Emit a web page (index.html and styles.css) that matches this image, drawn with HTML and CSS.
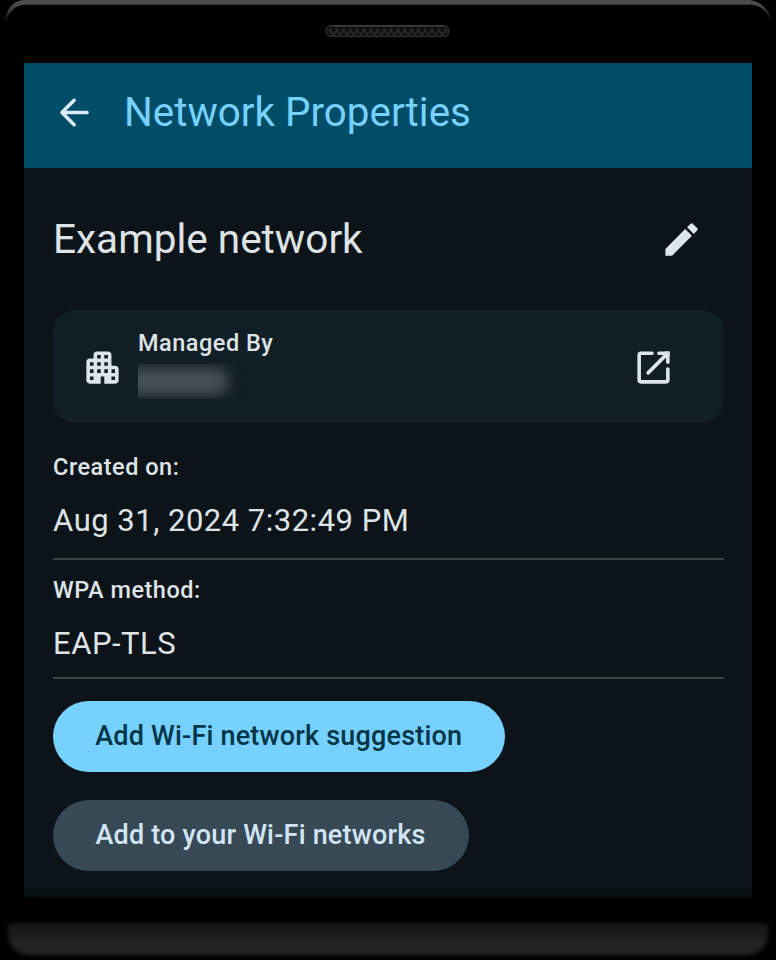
FILE: index.html
```html
<!DOCTYPE html>
<html lang="en">
<head>
<meta charset="utf-8">
<title>Network Properties</title>
<link rel="stylesheet" href="styles.css">
</head>
<body>
<div class="phone">
  <svg class="rim" viewBox="0 0 776 24" aria-hidden="true">
    <defs>
      <linearGradient id="rimFade" x1="0" y1="0" x2="0" y2="1">
        <stop offset="0.2" stop-color="#4b4b4b"/>
        <stop offset="1" stop-color="#111"/>
      </linearGradient>
    </defs>
    <path fill="url(#rimFade)" d="M5 22C6 8 13 0 26 0H747C760 0 768 8 772 22C766 9 759 4.7 749 4.7H25C17 4.7 10 10 5 22Z"/>
  </svg>
  <div class="top-bezel">
    <svg class="speaker" width="126" height="14" viewBox="0 0 126 14" aria-hidden="true">
      <defs>
        <pattern id="mesh" x="5" width="6.8" height="14" patternUnits="userSpaceOnUse">
          <path d="M0 4.5L1 8L3.4 10.5L5.8 8L6.8 4.5" fill="none" stroke="#303030" stroke-width="1.2"/>
        </pattern>
      </defs>
      <rect x="1" y="1.7" width="123" height="10.500" rx="5.2" fill="#101010" stroke="#2b2b2b" stroke-width="1.5"/>
      <rect x="4" y="1" width="118" height="11" fill="url(#mesh)"/>
      <path d="M6 1.8H119" stroke="#414141" stroke-width="1.5"/>
    </svg>
  </div>
  <main class="screen">
    <header class="app-bar">
      <svg class="icon back" viewBox="0 0 24 24" aria-label="Back">
        <path d="M19 12H5.4M11.8 5.2L5 12l6.800 6.800" fill="none" stroke="currentColor" stroke-width="2" stroke-linecap="round" stroke-linejoin="round"/>
      </svg>
      <h1 class="title">Network Properties</h1>
    </header>
    <div class="content">
      <div class="name-row">
        <h2 class="name">Example network</h2>
        <svg class="icon edit" viewBox="0 0 24 24" aria-label="Edit">
          <path fill="currentColor" d="M3 17.250V21h3.750L17.810 9.940l-3.750-3.750L3 17.250zM20.710 7.040a1 1 0 0 0 0-1.410l-2.340-2.340a1 1 0 0 0-1.410 0l-1.830 1.830 3.750 3.750 1.830-1.830z"/>
        </svg>
      </div>
      <section class="card">
        <svg class="icon" viewBox="0 0 24 24" aria-hidden="true">
          <path fill="currentColor" fill-rule="evenodd" d="M9 3h6a2 2 0 0 1 2 2v6h2a2 2 0 0 1 2 2v6a2 2 0 0 1-2 2h-6v-4h-2v4H5a2 2 0 0 1-2-2V9a2 2 0 0 1 2-2h2V5a2 2 0 0 1 2-2zM9 5v2h2V5zM13 5v2h2V5zM5 9v2h2V9zM9 9v2h2V9zM13 9v2h2V9zM5 13v2h2v-2zM9 13v2h2v-2zM13 13v2h2v-2zM17 13v2h2v-2zM5 17v2h2v-2zM17 17v2h2v-2z"/>
        </svg>
        <div class="manager">
          <span class="label">Managed By</span>
          <span class="redacted"><span class="smudge"></span></span>
        </div>
        <svg class="icon open" viewBox="0 0 24 24" aria-label="Open">
          <path d="M11.200 4H5a1 1 0 0 0-1 1v14a1 1 0 0 0 1 1h14a1 1 0 0 0 1-1v-6.200M15 4h5v5M19.600 4.400L9 15" fill="none" stroke="currentColor" stroke-width="2" stroke-linecap="round"/>
          <path d="M18 3h3v3z" fill="currentColor"/>
        </svg>
      </section>
      <dl class="details">
        <div class="field created">
          <dt class="label">Created on:</dt>
          <dd class="value">Aug 31, 2024 7:32:49 PM</dd>
        </div>
        <div class="field wpa">
          <dt class="label">WPA method:</dt>
          <dd class="value">EAP-TLS</dd>
        </div>
      </dl>
      <div class="actions">
        <button class="button primary">Add Wi-Fi network suggestion</button>
        <button class="button tonal">Add to your Wi-Fi networks</button>
      </div>
    </div>
  </main>
  <div class="bottom-bezel"><div class="chin"></div></div>
</div>
</body>
</html>
```
FILE: styles.css
```css
* { box-sizing: border-box; }
body, h1, h2, dl, dt, dd { margin: 0; }
body { background: #000; font-family: Roboto, sans-serif; color: #dee3e6; }
.phone {
  position: relative;
  width: 776px;
  height: 960px;
  overflow: hidden;
  display: flex;
  flex-direction: column;
  background: #000;
}
.rim { position: absolute; top: 0; left: 0; width: 776px; height: 24px; }
.top-bezel {
  height: 63px;
  flex: none;
  display: flex;
  justify-content: center;
  padding-top: 24px;
}
.speaker { display: block; }
.screen {
  width: 728px;
  height: 835px;
  flex: none;
  margin-left: 24px;
  background: linear-gradient(#0c141a 0 825px, #080f11 826px 832px, #050a0b);
}
.app-bar {
  height: 105px;
  display: flex;
  align-items: flex-start;
  padding: 28px 0 0 29px;
  background: #004d67;
}
.icon { width: 43px; height: 43px; flex: none; color: #dbe5ea; }
.back { color: #dceaf8; }
.title {
  margin-left: 28px;
  margin-top: -2px;
  font-size: 40.400px;
  line-height: 47px;
  font-weight: 400;
  color: #76d1ff;
}
.content { padding: 0 28.500px; }
.name-row {
  height: 142px;
  display: flex;
  align-items: center;
  justify-content: space-between;
  padding-right: 21px;
}
.name { font-size: 40.500px; line-height: 47px; font-weight: 400; padding: 1px 0 0 0.500px; }
.card {
  height: 113px;
  display: flex;
  align-items: center;
  padding: 1px 49px 0 28px;
  border-radius: 22px;
  background: #121e25;
}
.manager { margin: -8px 0 0 14.500px; display: flex; flex-direction: column; flex: 1; }
.label {
  font-size: 23.500px;
  line-height: 32px;
  font-weight: 500;
  letter-spacing: 0.500px;
}
.redacted { display: block; height: 35px; margin-top: 5px; width: 110px; overflow: hidden; }
.smudge {
  display: block;
  width: 104px;
  height: 27px;
  margin: 4px 0 0 -14px;
  border-radius: 10px;
  background: #475157;
  filter: blur(7px);
}
.field { border-bottom: 2px solid #3c4446; display: flex; flex-direction: column; padding-left: 0.600px; }
.created { height: 136.500px; padding-top: 28px; }
.wpa { height: 119px; padding-top: 14px; }
.value { font-size: 31px; line-height: 42px; margin-top: 17px; letter-spacing: 0.500px; }
.actions {
  display: flex;
  flex-direction: column;
  align-items: flex-start;
  gap: 28px;
  padding-top: 22px;
}
.button {
  height: 71px;
  padding: 0 0 1px;
  border: 0;
  border-radius: 36px;
  font: 500 27px/36px Roboto, sans-serif;
  letter-spacing: 0.2px;
}
.primary { width: 452.500px; background: #76d1ff; color: #003548; }
.tonal { width: 416px; background: #374955; color: #d2e5f5; }
.bottom-bezel { padding: 23px 5px 0; }
.chin {
  height: 37px;
  border-radius: 5px 5px 25px 25px;
  background: linear-gradient(#131313, #252525 60%, #222 85%, #0c0c0c);
  box-shadow: inset 3px 0 5px #000, inset -3px 0 5px #000;
}
```
